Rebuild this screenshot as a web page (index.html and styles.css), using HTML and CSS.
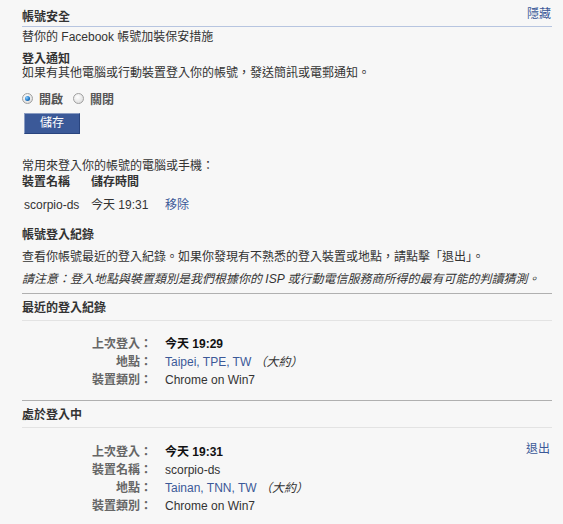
FILE: index.html
```html
<!DOCTYPE html>
<html lang="zh-Hant">
<head>
<meta charset="utf-8">
<title>帳號安全</title>
<link rel="stylesheet" href="styles.css">
</head>
<body>
<div class="wrap">
  <div class="top">
    <h1 class="title">帳號安全</h1>
    <a class="link" href="#">隱藏</a>
  </div>
  <p class="intro">替你的 Facebook 帳號加裝保安措施</p>

  <h2 class="sub">登入通知</h2>
  <p class="line14">如果有其他電腦或行動裝置登入你的帳號，發送簡訊或電郵通知。</p>

  <div class="radios">
    <label class="radio"><span class="dot on"></span><span class="rlabel">開啟</span></label>
    <label class="radio"><span class="dot"></span><span class="rlabel">關閉</span></label>
  </div>
  <button class="btn">儲存</button>

  <p class="devices-intro">常用來登入你的帳號的電腦或手機：</p>
  <div class="dev-table">
    <div class="dev-head">裝置名稱</div>
    <div class="dev-head">儲存時間</div>
    <div></div>
    <div class="dev-cell">scorpio-ds</div>
    <div class="dev-cell">今天 19:31</div>
    <div class="dev-cell"><a class="link" href="#">移除</a></div>
  </div>

  <h2 class="sub log">帳號登入紀錄</h2>
  <p class="desc">查看你帳號最近的登入紀錄。如果你發現有不熟悉的登入裝置或地點，請點擊「退出」。</p>
  <p class="note">請注意：登入地點與裝置類別是我們根據你的 ISP 或行動電信服務商所得的最有可能的判讀猜測。</p>

  <section class="block">
    <h3 class="block-title">最近的登入紀錄</h3>
    <div class="details">
      <div class="label">上次登入：</div><div class="val strong">今天 19:29</div>
      <div class="label">地點：</div><div class="val"><span class="loc">Taipei, TPE, TW</span> <em class="approx">（大約）</em></div>
      <div class="label">裝置類別：</div><div class="val">Chrome on Win7</div>
    </div>
  </section>

  <section class="block">
    <h3 class="block-title">處於登入中</h3>
    <div class="session">
      <div class="details">
        <div class="label">上次登入：</div><div class="val strong">今天 19:31</div>
        <div class="label">裝置名稱：</div><div class="val">scorpio-ds</div>
        <div class="label">地點：</div><div class="val"><span class="loc">Tainan, TNN, TW</span> <em class="approx">（大約）</em></div>
        <div class="label">裝置類別：</div><div class="val">Chrome on Win7</div>
      </div>
      <a class="link logout" href="#">退出</a>
    </div>
  </section>
</div>
</body>
</html>
```

FILE: styles.css
```css
html, body {
  margin: 0;
  padding: 0;
  background: #f7f7f7;
}
body {
  font-family: "Liberation Sans", "Noto Sans CJK TC", sans-serif;
  font-size: 12px;
  color: #333;
}
.wrap {
  width: 530px;
  margin-left: 22px;
}
p, h1, h2, h3 { margin: 0; }
.link {
  color: #3b5998;
  text-decoration: none;
}
.top {
  display: flex;
  justify-content: space-between;
  align-items: flex-end;
  padding-top: 7px;
  padding-bottom: 1px;
  border-bottom: 1px solid #b7c5e0;
}
.title {
  font-size: 12px;
  font-weight: bold;
  line-height: 16px;
}
.top .link { line-height: 14px; margin-bottom: 4px; margin-right: 1px; }
.intro {
  margin-top: 2px;
  line-height: 16px;
}
.sub {
  font-size: 12px;
  font-weight: bold;
  line-height: 14px;
  margin-top: 7px;
}
.line14 { line-height: 14px; }
.radios {
  display: flex;
  gap: 10px;
  margin-top: 10px;
  height: 16px;
  align-items: center;
}
.radio {
  display: flex;
  align-items: center;
  gap: 6px;
}
.dot {
  width: 11px;
  height: 11px;
  border-radius: 50%;
  border: 1px solid #a0a0a0;
  background: radial-gradient(circle at 40% 35%, #ffffff 0%, #e6e6e6 60%, #cfcfcf 100%);
  box-sizing: border-box;
  position: relative;
}
.dot.on::after {
  content: "";
  position: absolute;
  left: 2px;
  top: 2px;
  width: 5px;
  height: 5px;
  border-radius: 50%;
  background: radial-gradient(circle at 35% 35%, #8fd0ff 0%, #1e78c8 55%, #0b3f7a 100%);
}
.rlabel {
  font-weight: bold;
  color: #555;
}
.btn {
  display: block;
  margin-top: 7px;
  margin-left: 2px;
  width: 56px;
  height: 21px;
  padding: 0;
  background: #3b5998;
  border: 1px solid #29447e;
  border-top-color: #8a9cc2;
  border-left-color: #8a9cc2;
  color: #fff;
  font-family: "Liberation Sans", "Noto Sans CJK TC", sans-serif;
  font-size: 12px;
  line-height: 19px;
}
.devices-intro {
  margin-top: 24px;
  line-height: 16px;
}
.dev-table {
  display: grid;
  grid-template-columns: 69px 74px auto;
  justify-content: start;
}
.dev-head {
  font-weight: bold;
  line-height: 16px;
}
.dev-cell {
  margin-top: 7px;
  line-height: 16px;
}
.dev-cell:first-child, .dev-table .dev-cell:nth-child(4) { padding-left: 2px; }
.log {
  line-height: 16px;
  margin-top: 14px;
}
.desc {
  margin-top: 6px;
  line-height: 16px;
}
.note {
  margin-top: 6px;
  line-height: 16px;
  font-style: italic;
  color: #333;
}
.block {
  margin-top: 6px;
  border-top: 1px solid #b0b0b0;
}
.block + .block { margin-top: 11px; }
.block-title {
  font-size: 12px;
  font-weight: bold;
  line-height: 16px;
  padding-top: 6px;
  padding-bottom: 4px;
  border-bottom: 1px solid #e3e3e3;
}
.details {
  display: grid;
  grid-template-columns: 130px auto;
  column-gap: 13px;
  margin-top: 14px;
  line-height: 18px;
}
.session .details { margin-top: 15px; }
.label {
  text-align: right;
  font-weight: bold;
  color: #666;
}
.val { color: #333; }
.val.strong { font-weight: bold; color: #111; }
.loc { color: #3b5998; }
.approx { font-style: italic; color: #333; }
.session {
  display: flex;
  justify-content: space-between;
  align-items: flex-start;
}
.logout {
  margin-top: 13px;
  margin-right: 2px;
  line-height: 16px;
}
```
